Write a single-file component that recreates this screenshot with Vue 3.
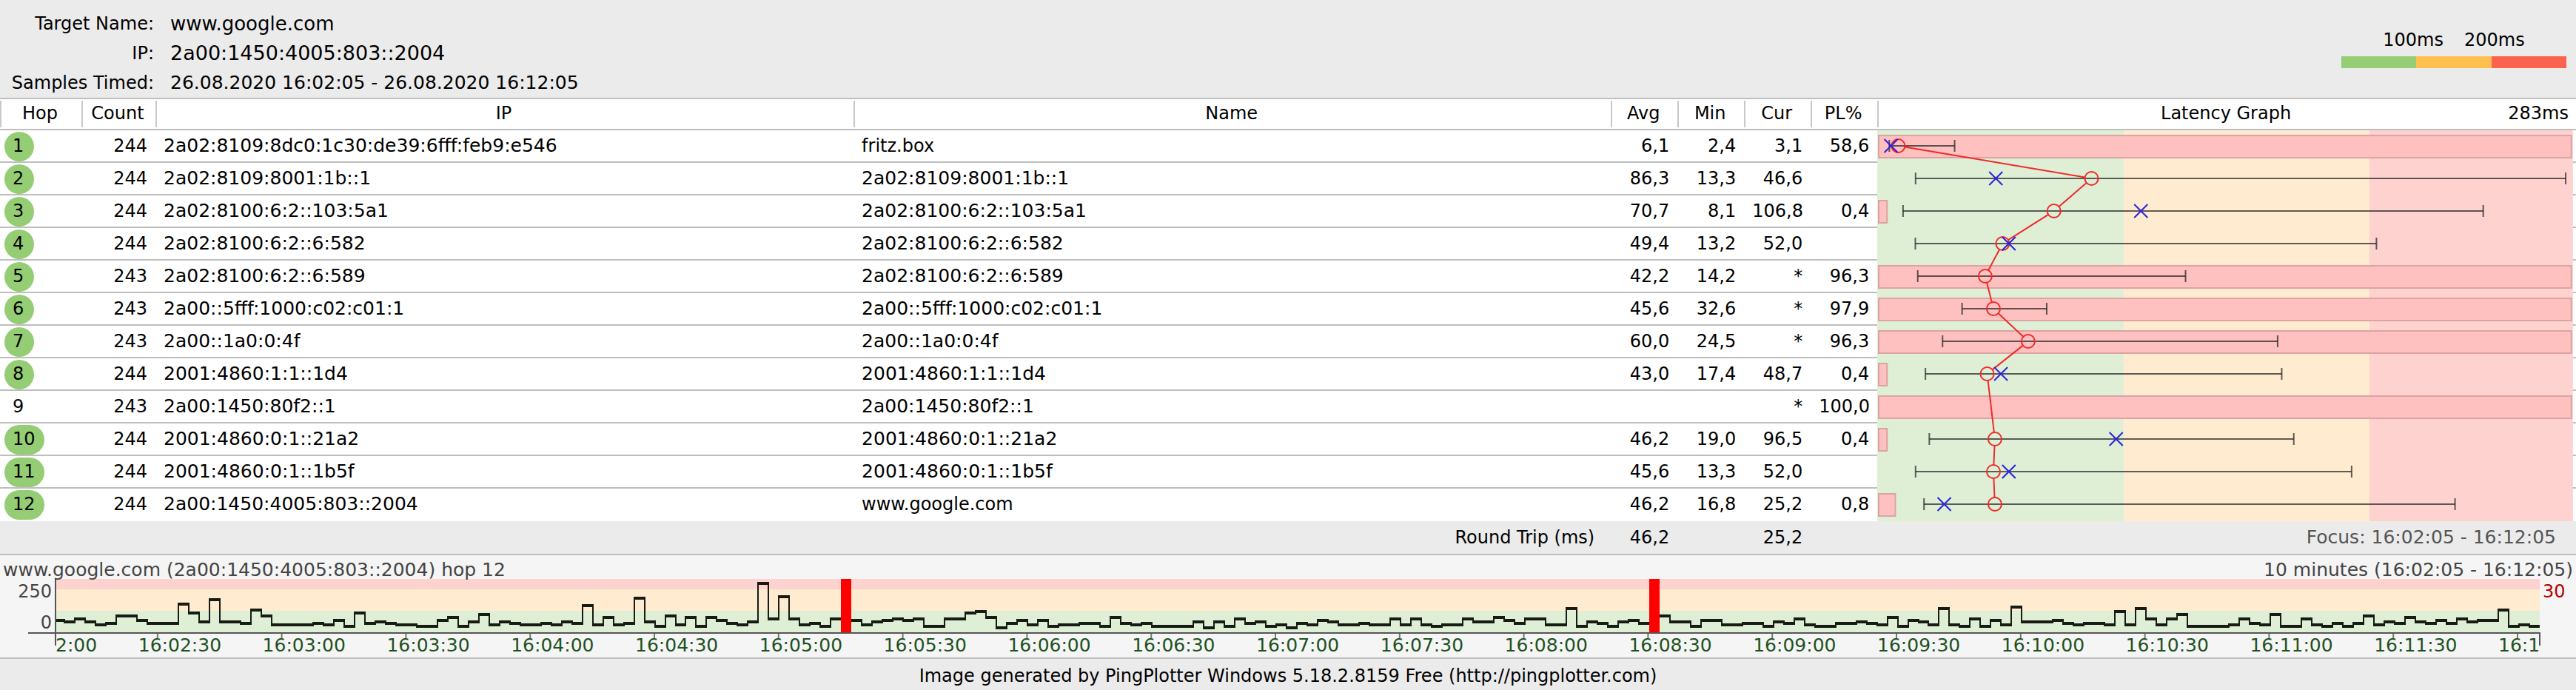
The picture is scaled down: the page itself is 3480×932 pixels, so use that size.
<script setup>
const hops = [
  { n: 1, count: 244, ip: '2a02:8109:8dc0:1c30:de39:6fff:feb9:e546', name: 'fritz.box', avg: 6.1, min: 2.4, cur: 3.1, loss: 58.6, max: 29.5 },
  { n: 2, count: 244, ip: '2a02:8109:8001:1b::1', name: '2a02:8109:8001:1b::1', avg: 86.3, min: 13.3, cur: 46.6, loss: null, max: 283 },
  { n: 3, count: 244, ip: '2a02:8100:6:2::103:5a1', name: '2a02:8100:6:2::103:5a1', avg: 70.7, min: 8.1, cur: 106.8, loss: 0.4, max: 248.8 },
  { n: 4, count: 244, ip: '2a02:8100:6:2::6:582', name: '2a02:8100:6:2::6:582', avg: 49.4, min: 13.2, cur: 52.0, loss: null, max: 204.5 },
  { n: 5, count: 243, ip: '2a02:8100:6:2::6:589', name: '2a02:8100:6:2::6:589', avg: 42.2, min: 14.2, cur: null, loss: 96.3, max: 125.3 },
  { n: 6, count: 243, ip: '2a00::5fff:1000:c02:c01:1', name: '2a00::5fff:1000:c02:c01:1', avg: 45.6, min: 32.6, cur: null, loss: 97.9, max: 67.7 },
  { n: 7, count: 243, ip: '2a00::1a0:0:4f', name: '2a00::1a0:0:4f', avg: 60.0, min: 24.5, cur: null, loss: 96.3, max: 163.5 },
  { n: 8, count: 244, ip: '2001:4860:1:1::1d4', name: '2001:4860:1:1::1d4', avg: 43.0, min: 17.4, cur: 48.7, loss: 0.4, max: 165.2 },
  { n: 9, count: 243, ip: '2a00:1450:80f2::1', name: '2a00:1450:80f2::1', avg: null, min: null, cur: null, loss: 100.0, max: null },
  { n: 10, count: 244, ip: '2001:4860:0:1::21a2', name: '2001:4860:0:1::21a2', avg: 46.2, min: 19.0, cur: 96.5, loss: 0.4, max: 170.2 },
  { n: 11, count: 244, ip: '2001:4860:0:1::1b5f', name: '2001:4860:0:1::1b5f', avg: 45.6, min: 13.3, cur: 52.0, loss: null, max: 194.2 },
  { n: 12, count: 244, ip: '2a00:1450:4005:803::2004', name: 'www.google.com', avg: 46.2, min: 16.8, cur: 25.2, loss: 0.8, max: 237.1 },
]

const fmt = (v) => (v === null ? '' : v.toFixed(1).replace('.', ','))
const isAddress = (s) => s.includes(':')

// Latency graph: nominal width, with positions handed over as percentages
const ROW = 44
const GRAPH_W = 944
const ZONE_END = 940
const pct = (px) => (px / GRAPH_W) * 100 + '%'
const msPx = (ms) => 8.5 + ms * 3.257
const msPct = (ms) => pct(msPx(ms))
const rowMid = (i) => i * ROW + 21
const zones = [
  { x: 0, w: 333, fill: '#deefd6' },
  { x: 333, w: 332, fill: '#ffebcf' },
  { x: 665, w: 275, fill: '#fdd2cf' },
]
const lossBars = hops
  .map((h, i) => ({ y: i * ROW + 7, loss: h.loss }))
  .filter((b) => b.loss !== null)
  .map((b) => ({ y: b.y, w: Math.min(b.loss * 28, ZONE_END - 4) }))
const measured = hops.map((h, i) => ({ ...h, y: rowMid(i) })).filter((h) => h.avg !== null)
const RADIUS = 9
const links = measured.slice(1).map((b, i) => {
  const a = measured[i]
  const ax = msPx(a.avg)
  const bx = msPx(b.avg)
  const len = Math.hypot(bx - ax, b.y - a.y)
  const dx = ((bx - ax) / len) * RADIUS
  const dy = ((b.y - a.y) / len) * RADIUS
  return { x1: pct(ax + dx), y1: a.y + dy, x2: pct(bx - dx), y2: b.y - dy }
})

// Timeline samples, one per 2.5 s; -1 marks a lost packet
const samples = [
  8, 7, 9, 7, 5, 6, 11, 11, 8, 6, 6, 6, 19, 13, 7, 22, 7, 7, 6, 15, 11, 5, 5, 5, 5, 6, 5, 8, 4, 13, 6, 7, 6, 5, 5, 4, 4, 8, 10,
  4, 7, 12, 5, 7, 6, 5, 5, 6, 5, 7, 6, 18, 5, 10, 5, 6, 23, 7, 4, 11, 5, 10, 4, 10, 8, 6, 5, 7, 33, 9, 24, 9, 5, 6, 4, 9, -1, 8, 5, 7, 8,
  9,
  8, 9, 4, 4, 9, 9, 13, 14, 10, 3, 6, 8, 5, 8, 4, 5, 5, 6, 6, 4, 10, 6, 5, 6, 4, 4, 4, 4, 7, 3, 7, 4, 9, 6, 7, 4, 5, 3, 6, 5, 8, 7,
  5, 5, 6, 5, 5, 9, 5, 9, 5, 4, 5, 5, 9, 7, 7, 10, 8, 6, 9, 9, 5, 5, 16, 4, 7, 6, 4, 7, 8, 6, -1, 11, 7, 7, 4, 8, 8, 5, 5, 6, 6, 4, 7,
  6, 9, 5, 4, 4, 6, 6, 7, 6, 5, 10, 4, 8, 7, 5, 16, 5, 4, 9, 4, 8, 5, 17, 7, 7, 7, 8, 6, 5, 6, 6, 5, 14, 5, 16, 9, 5, 9, 12,
  4, 4, 4, 4, 5, 9, 6, 5, 12, 4, 4, 9, 5, 4, 6, 4, 6, 11, 5, 7, 6, 10, 7, 6, 8, 6, 9, 7, 8, 8, 15, 4, 5, 4,
]
const PLOT_W = 3356
const PLOT_H = 72
const FIRST = 12
const STEP = (PLOT_W - FIRST) / (samples.length - 1)
const edge = (k) => (k === 0 ? 0 : Math.round(FIRST + (k - 1) * STEP))
const level = (v) => PLOT_H - v * 2
let trace = ''
const lost = []
samples.forEach((v, k) => {
  const x0 = edge(k)
  const x1 = edge(k + 1)
  if (v < 0) {
    lost.push({ x: x0, w: x1 - x0 })
    return
  }
  const y = level(v)
  trace += `M${x0 - 1} ${y - 2}H${x1 + 1}V${y + 2}H${x0 - 1}Z`
  const prev = samples[k - 1]
  if (k > 0 && prev >= 0 && prev !== v) {
    const top = Math.min(y, level(prev)) - 2
    const bottom = Math.max(y, level(prev)) + 2
    trace += `M${x0 - 1} ${top}H${x0 + 1}V${bottom}H${x0 - 1}Z`
  }
})

const TICKS = 21
const ticks = Array.from({ length: TICKS }, (_, i) => {
  const total = 2 * 60 + i * 30
  const mm = String(Math.floor(total / 60)).padStart(2, '0')
  const ss = String(total % 60).padStart(2, '0')
  const full = `16:${mm}:${ss}`
  const label = i === 0 ? full.slice(4) : i === TICKS - 1 ? full.slice(0, 4) : full
  const px = i === 0 ? 26 : -30 + i * 167.8
  return { label, x: (px / PLOT_W) * 100 + '%', mark: i > 0 }
})
</script>

<template>
  <main class="report">
    <header class="summary">
      <dl class="facts">
        <dt>Target Name:</dt>
        <dd class="host">www.google.com</dd>
        <dt>IP:</dt>
        <dd class="target-ip">2a00:1450:4005:803::2004</dd>
        <dt>Samples Timed:</dt>
        <dd>26.08.2020 16:02:05 - 26.08.2020 16:12:05</dd>
      </dl>
      <div class="legend">
        <div class="legend-labels"><span>100ms</span><span>200ms</span></div>
        <div class="legend-bar"><i class="good"></i><i class="warn"></i><i class="bad"></i></div>
      </div>
    </header>

    <table class="hops">
      <colgroup>
        <col class="c-hop" /><col class="c-count" /><col class="c-ip" /><col class="c-name" />
        <col class="c-num" /><col class="c-num" /><col class="c-num" /><col class="c-num" /><col />
      </colgroup>
      <thead>
        <tr>
          <th scope="col"><div>Hop</div></th>
          <th scope="col"><div>Count</div></th>
          <th scope="col"><div>IP</div></th>
          <th scope="col"><div>Name</div></th>
          <th scope="col"><div>Avg</div></th>
          <th scope="col"><div>Min</div></th>
          <th scope="col"><div>Cur</div></th>
          <th scope="col"><div>PL%</div></th>
          <th scope="col"><div class="graph-head"><span></span><span>Latency Graph</span><span class="scale">283ms</span></div></th>
        </tr>
      </thead>
      <tbody>
        <tr v-for="(h, i) in hops" :key="h.n">
          <td class="hop"><span class="badge" :class="{ live: h.avg !== null }">{{ h.n }}</span></td>
          <td class="num">{{ h.count }}</td>
          <td class="text address">{{ h.ip }}</td>
          <td class="text" :class="{ address: isAddress(h.name) }">{{ h.name }}</td>
          <td class="num">{{ fmt(h.avg) }}</td>
          <td class="num">{{ fmt(h.min) }}</td>
          <td class="num">{{ h.cur === null ? '*' : fmt(h.cur) }}</td>
          <td class="num">{{ fmt(h.loss) }}</td>
          <td v-if="i === 0" class="graph" :rowspan="hops.length">
            <svg width="100%" :height="hops.length * ROW" role="img" aria-label="Latency Graph">
              <rect v-for="z in zones" :key="z.x" :x="pct(z.x)" y="0" :width="pct(z.w)" height="100%" :fill="z.fill" />
              <line v-for="k in hops.length - 1" :key="'r' + k" :x1="pct(ZONE_END)" x2="100%" :y1="k * ROW - 1" :y2="k * ROW - 1" stroke="#bebebe" stroke-width="2" />
              <rect v-for="b in lossBars" :key="'l' + b.y" :x="pct(2)" :y="b.y" :width="pct(b.w)" height="30" class="loss" />
              <g v-for="h in measured" :key="'m' + h.n" class="range">
                <line :x1="msPct(h.min)" :x2="msPct(h.max)" :y1="h.y" :y2="h.y" />
                <line :x1="msPct(h.min)" :x2="msPct(h.min)" :y1="h.y - 8" :y2="h.y + 8" />
                <line :x1="msPct(h.max)" :x2="msPct(h.max)" :y1="h.y - 8" :y2="h.y + 8" />
              </g>
              <g class="average">
                <line v-for="(l, k) in links" :key="k" :x1="l.x1" :y1="l.y1" :x2="l.x2" :y2="l.y2" />
                <circle v-for="h in measured" :key="h.n" :cx="msPct(h.avg)" :cy="h.y" :r="RADIUS" />
              </g>
              <template v-for="h in measured" :key="'c' + h.n">
                <svg v-if="h.cur !== null" :x="msPct(h.cur)" :y="h.y" class="current">
                  <path d="M-9 -9L9 9M9 -9L-9 9" />
                </svg>
              </template>
            </svg>
          </td>
        </tr>
      </tbody>
      <tfoot>
        <tr>
          <td colspan="4" class="trip">Round Trip (ms)</td>
          <td class="num">46,2</td>
          <td></td>
          <td class="num">25,2</td>
          <td></td>
          <td class="focus">Focus: 16:02:05 - 16:12:05</td>
        </tr>
      </tfoot>
    </table>

    <section class="timeline">
      <div class="timeline-head">
        <span>www.google.com (2a00:1450:4005:803::2004) hop 12</span>
        <span>10 minutes (16:02:05 - 16:12:05)</span>
      </div>
      <div class="timeline-body">
        <div class="scale-left"><span>250</span><span>0</span></div>
        <svg class="plot" height="106">
          <rect x="0" y="0" width="100%" height="14" fill="#fdd2cf" />
          <rect x="0" y="14" width="100%" height="29" fill="#ffebcf" />
          <rect x="0" y="43" width="100%" height="29" fill="#deefd6" />
          <svg x="0" y="0" width="100%" :height="PLOT_H" :viewBox="`0 0 ${PLOT_W} ${PLOT_H}`" preserveAspectRatio="none">
            <path :d="trace" fill="#171b14" shape-rendering="crispEdges" />
            <rect v-for="r in lost" :key="r.x" :x="r.x" y="0" :width="r.w" :height="PLOT_H" fill="#ff0000" />
          </svg>
          <g stroke="#555555" stroke-width="2">
            <line x1="-37" x2="100%" y1="73" y2="73" />
            <line x1="0" x2="0" y1="-1" y2="90" />
            <line x1="100%" x2="100%" y1="72" y2="90" />
          </g>
          <g v-for="t in ticks" :key="t.label">
            <line v-if="t.mark" :x1="t.x" :x2="t.x" y1="74" y2="81" stroke="#777777" stroke-width="2" />
            <svg :x="t.x" y="72" class="tick-label"><text x="-26" y="26">{{ t.label }}</text></svg>
          </g>
        </svg>
        <div class="scale-right">30</div>
      </div>
    </section>

    <footer class="credit">Image generated by PingPlotter Windows 5.18.2.8159 Free (http://pingplotter.com)</footer>
  </main>
</template>

<style>
body {
  background: #ebebeb;
}
</style>

<style scoped>
.report {
  font-family: "DejaVu Sans", Verdana, sans-serif;
  font-size: 24px;
  color: #000;
  background: #ebebeb;
}

.summary {
  display: flex;
  justify-content: space-between;
  height: 132px;
  box-sizing: border-box;
  padding: 12px 13px 0 0;
}
.facts {
  display: grid;
  grid-template-columns: 208px auto;
  column-gap: 22px;
  margin: 0;
  line-height: 40px;
  height: 120px;
  white-space: nowrap;
}
.facts dt {
  text-align: right;
}
.facts dd {
  margin: 0;
  font-size: 25px;
}
.facts dd.host {
  font-size: 26px;
}
.facts dd.target-ip {
  font-size: 27px;
}
.legend {
  width: 304px;
  padding-top: 24px;
}
.legend-labels {
  display: flex;
  justify-content: center;
  gap: 28px;
  line-height: 36px;
  height: 40px;
}
.legend-bar {
  display: flex;
  height: 16px;
}
.legend-bar i {
  flex: 1;
}
.good {
  background: #94cd73;
}
.warn {
  background: #ffc050;
}
.bad {
  background: #fb634f;
}

.hops {
  width: 100%;
  table-layout: fixed;
  border-collapse: separate;
  border-spacing: 0;
  border-top: 2px solid #bebebe;
  background: #fff;
  white-space: nowrap;
}
.c-hop {
  width: 110px;
}
.c-count {
  width: 100px;
}
.c-ip {
  width: 27.1%;
}
.c-name {
  width: 29.4%;
}
.c-num {
  width: 90px;
}
.hops th {
  padding: 2px 0;
  border-bottom: 2px solid #bebebe;
  font-weight: 400;
}
.hops th div {
  border-left: 2px solid #c8c8c8;
  padding-right: 4px;
  height: 36px;
  line-height: 34px;
}
.hops th .graph-head {
  display: grid;
  grid-template-columns: 1fr auto 1fr;
}
.scale {
  text-align: right;
  padding-right: 6px;
}
.hops td {
  height: 44px;
  box-sizing: border-box;
  padding: 0 11px;
  line-height: 42px;
  vertical-align: top;
}
.hops tbody td {
  border-bottom: 2px solid #bebebe;
}
.hops tbody tr:last-child td,
.hops tbody td.graph {
  border-bottom: 0;
}
.hops td.graph {
  padding: 0;
}
.graph svg {
  display: block;
}
.hops td.hop {
  padding: 0 6px;
}
.badge {
  display: block;
  width: max-content;
  min-width: 40px;
  height: 40px;
  box-sizing: border-box;
  margin-top: 2px;
  padding: 0 12px 0 11px;
  border-radius: 20px;
  line-height: 38px;
}
.badge.live {
  background: #94cd73;
}
.num {
  text-align: right;
}
.address {
  font-size: 25px;
}
.loss {
  fill: #ffc0c0;
  stroke: #dba4a4;
  stroke-width: 2;
}
.range line {
  stroke: #222;
  stroke-opacity: 0.72;
  stroke-width: 2;
}
.average {
  fill: none;
  stroke: #f02a2a;
  stroke-width: 2;
}
.current {
  overflow: visible;
  fill: none;
  stroke: #2a22dd;
  stroke-width: 2;
}
.hops tfoot td {
  background: #ebebeb;
  line-height: 46px;
  height: 44px;
}
.hops tfoot tr {
  height: 44px;
}
.hops tfoot td {
  line-height: 44px;
}
.hops tfoot td.trip {
  text-align: right;
  padding-right: 22px;
}
.hops tfoot td.focus {
  text-align: right;
  padding-right: 27px;
  font-size: 25px;
  color: #555;
}

.timeline {
  border-top: 2px solid #bebebe;
  border-bottom: 2px solid #bebebe;
  background: #f5f5f5;
  color: #444;
}
.timeline-head {
  display: flex;
  justify-content: space-between;
  height: 32px;
  line-height: 40px;
  padding: 0 4px;
  font-size: 25px;
}
.timeline-head span {
  position: relative;
  z-index: 1;
}
.timeline-body {
  display: grid;
  grid-template-columns: 75px 1fr 49px;
  height: 106px;
}
.scale-left {
  display: flex;
  flex-direction: column;
  gap: 8px;
  padding-right: 5px;
  text-align: right;
  line-height: 34px;
}
.scale-right {
  padding-left: 4px;
  line-height: 34px;
  color: #b40000;
}
.plot {
  display: block;
  width: 100%;
  overflow: visible;
}
.tick-label {
  overflow: visible;
  font-size: 25px;
  fill: #1e521e;
}

.credit {
  height: 42px;
  line-height: 46px;
  text-align: center;
}
</style>
